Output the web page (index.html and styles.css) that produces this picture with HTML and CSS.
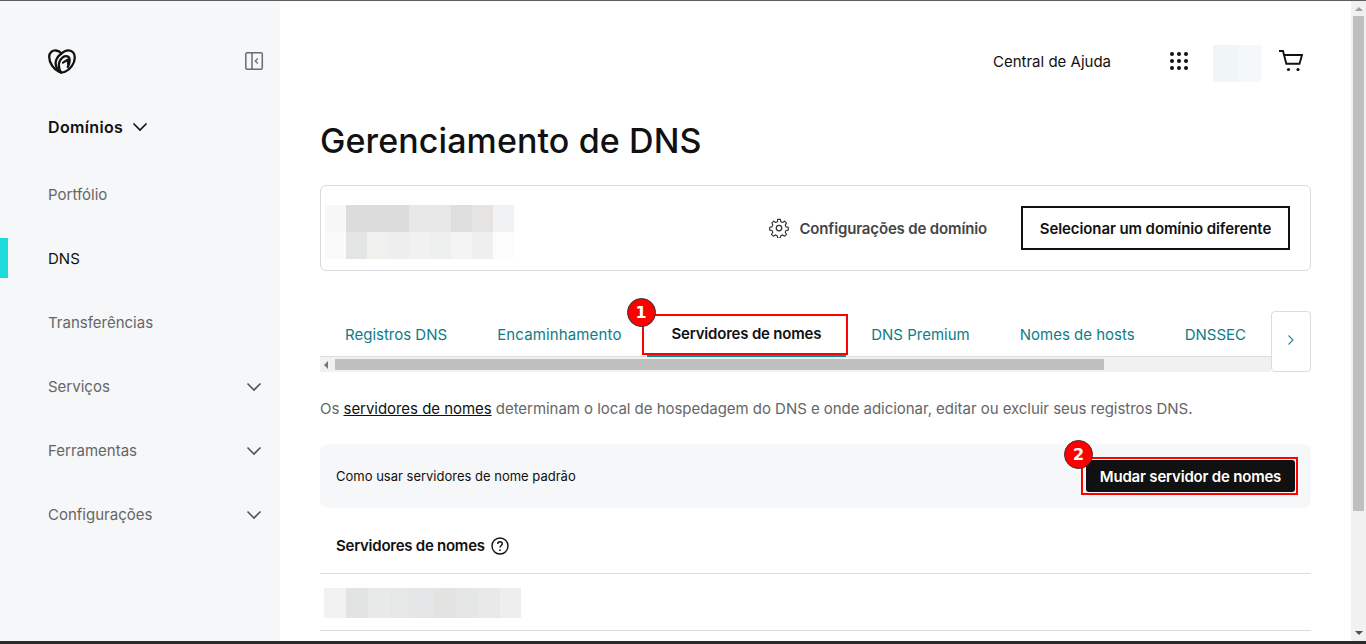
FILE: index.html
```html
<!DOCTYPE html>
<html lang="pt-BR">
<head>
<meta charset="utf-8">
<title>Gerenciamento de DNS</title>
<link rel="stylesheet" href="styles.css">
</head>
<body>
<div class="topline"></div>
<div class="app">
  <aside class="sidebar">
    <div class="brand">
      <svg class="logo" width="28" height="25" viewBox="0 0 28 25" fill="none" stroke="#111" stroke-width="2.300" stroke-linecap="round" stroke-linejoin="round"><path d="M11 22.800C6 20.800 1.200 14 1.200 8 1.200 3.500 4.500 1.200 8 1.500c2 .2 4 1.300 5.500 3 2-2 4.500-3.300 7-3.200 4 .2 6.300 3.200 6.300 7.200 0 6-4.800 12.300-9.800 14.300-2 .8-4 .8-6 0z"/><path d="M13.500 4.500C9.500 7.500 7.200 11 7.700 15.200c.4 3.400 2.300 6.800 5.300 8.300"/><path d="M13 23.500c-1.800-3-2.600-7-1.700-10.200C12.500 9 16.500 6.300 19.500 7.300c3 1 2.600 6.700.3 10.700"/><path d="M15 13.600l4.700-3 .5 4.600"/></svg>
      <svg class="collapse" width="20" height="20" viewBox="0 0 20 20" fill="none" stroke="#6b6b6b" stroke-width="1.500"><rect x="1.800" y="1.800" width="16.500" height="16.500" rx="1.500"/><path d="M8 2v16"/><path d="M13.800 7.500L11.300 10l2.500 2.500" stroke-width="1.300"/></svg>
    </div>
    <div class="domains"><span>Domínios</span>
      <svg width="16" height="10" viewBox="0 0 16 10" fill="none" stroke="#111" stroke-width="1.600"><path d="M1.500 1.500L8 8l6.500-6.500"/></svg>
    </div>
    <nav class="nav">
      <a class="nav-item">Portfólio</a>
      <a class="nav-item active">DNS</a>
      <a class="nav-item">Transferências</a>
      <a class="nav-item">Serviços<svg class="nav-chev" width="16" height="10" viewBox="0 0 16 10" fill="none" stroke="#555" stroke-width="1.600"><path d="M1.500 1.500L8 8l6.500-6.500"/></svg></a>
      <a class="nav-item">Ferramentas<svg class="nav-chev" width="16" height="10" viewBox="0 0 16 10" fill="none" stroke="#555" stroke-width="1.600"><path d="M1.500 1.500L8 8l6.500-6.500"/></svg></a>
      <a class="nav-item">Configurações<svg class="nav-chev" width="16" height="10" viewBox="0 0 16 10" fill="none" stroke="#555" stroke-width="1.600"><path d="M1.500 1.500L8 8l6.500-6.500"/></svg></a>
    </nav>
  </aside>

  <main class="content">
    <header class="topbar">
      <a class="help">Central de Ajuda</a>
      <svg class="apps" width="18" height="18" viewBox="0 0 18 18" fill="#111"><circle cx="2" cy="2" r="2"/><circle cx="9" cy="2" r="2"/><circle cx="16" cy="2" r="2"/><circle cx="2" cy="9" r="2"/><circle cx="9" cy="9" r="2"/><circle cx="16" cy="9" r="2"/><circle cx="2" cy="16" r="2"/><circle cx="9" cy="16" r="2"/><circle cx="16" cy="16" r="2"/></svg>
      <div class="avatar"></div>
      <svg class="cart" width="24" height="22" viewBox="0 0 24 22" fill="none" stroke="#111" stroke-width="1.900"><path d="M0 1h4l3.300 12.800h13.200L23 5H5"/><circle cx="9.500" cy="19.500" r="1.600" fill="#111" stroke="none"/><circle cx="19" cy="19.500" r="1.600" fill="#111" stroke="none"/></svg>
    </header>

    <h1 class="title">Gerenciamento de DNS</h1>

    <section class="domain-card">
      <div class="blur-domain"></div>
      <div class="domain-actions">
        <a class="settings">
          <svg width="20" height="20" viewBox="0 0 24 24" fill="none" stroke="#333" stroke-width="1.500" stroke-linejoin="round"><circle cx="12" cy="12" r="3.300"/><path d="M10.200 1.800h3.600l.6 3 2.300 1 2.600-1.700 2.500 2.500-1.700 2.600 1 2.300 3 .6v3.600l-3 .6-1 2.300 1.700 2.600-2.500 2.500-2.600-1.700-2.300 1-.6 3h-3.600l-.6-3-2.300-1-2.600 1.700-2.500-2.500 1.700-2.600-1-2.300-3-.6v-3.600l3-.6 1-2.300L2.700 6.600l2.500-2.500 2.600 1.700 2.300-1z" transform="translate(12 12) scale(.92) translate(-12 -13)"/></svg>
          <span>Configurações de domínio</span>
        </a>
        <button class="select-btn">Selecionar um domínio diferente</button>
      </div>
    </section>

    <section class="tabs-wrap">
      <div class="tabs-scroll">
        <div class="tabs">
          <a class="tab">Registros DNS</a>
          <a class="tab tab-wide">Encaminhamento</a>
          <a class="tab tab-active">Servidores de nomes<span class="mark mark-tab"></span><span class="badge badge-tab">1</span></a>
          <a class="tab">DNS Premium</a>
          <a class="tab">Nomes de hosts</a>
          <a class="tab">DNSSEC</a>
        </div>
        <div class="hscroll"><span class="harrow"></span><span class="hthumb"></span></div>
      </div>
      <button class="next-btn"><svg width="8" height="12" viewBox="0 0 8 12" fill="none" stroke="#2f8a96" stroke-width="1.200"><path d="M1.500 1.500L6 6l-4.500 4.500"/></svg></button>
    </section>

    <p class="intro">Os <a class="intro-link">servidores de nomes</a> determinam o local de hospedagem do DNS e onde adicionar, editar ou excluir seus registros DNS.</p>

    <section class="banner">
      <span class="banner-text">Como usar servidores de nome padrão</span>
      <div class="change-wrap">
        <button class="change-btn">Mudar servidor de nomes</button>
        <span class="mark mark-btn"></span>
        <span class="badge badge-btn">2</span>
      </div>
    </section>

    <h2 class="ns-title">Servidores de nomes
      <svg width="18" height="18" viewBox="0 0 18 18" fill="none" stroke="#111" stroke-width="1.400"><circle cx="9" cy="9" r="8"/><path d="M6.700 7c0-1.400 1-2.300 2.300-2.300s2.300.9 2.300 2.100c0 1.700-2.300 1.800-2.300 3.700"/><circle cx="9" cy="13.200" r=".9" fill="#111" stroke="none"/></svg>
    </h2>
    <div class="ns-row"><div class="blur-ns"></div></div>
  </main>

  <div class="vscroll">
    <span class="varrow-up"></span>
    <span class="vthumb"></span>
    <span class="varrow-down"></span>
  </div>
</div>
<div class="bottomline"></div>
</body>
</html>
```
FILE: styles.css
```css
* { box-sizing: border-box; }
html, body { margin: 0; height: 100%; overflow: hidden; }
body {
  display: flex;
  flex-direction: column;
  height: 644px;
  background: #fff;
  color: #111;
  font-family: "Inter", "Liberation Sans", sans-serif;
}
.topline { height: 1px; background: #5e5e5e; flex: none; }
.bottomline { height: 3px; background: #2a2a2a; flex: none; }
.app { flex: 1; display: flex; min-height: 0; }

/* Sidebar */
.sidebar { width: 280px; flex: none; background: #f5f7f8; padding-top: 47px; }
.brand { display: flex; justify-content: space-between; align-items: center; padding: 0 16px 0 48px; height: 26px; }
.domains { display: flex; align-items: center; gap: 9px; margin: 40px 0 0 48px; height: 26px; font-size: 16px; font-weight: 600; letter-spacing: .35px; }
.nav { display: flex; flex-direction: column; gap: 24px; margin-top: 34px; }
.nav-item { display: flex; align-items: center; justify-content: space-between; height: 40px; padding: 0 18px 0 48px; font-size: 15px; color: #666; }
.nav-chev { margin-top: 1px; }
.nav-item.active { color: #111; border-left: 8px solid #1bdbdb; padding-left: 40px; }

/* Main */
.content { flex: 1; min-width: 0; padding: 44px 40px 0; overflow: hidden; }
.topbar { display: flex; justify-content: flex-end; align-items: center; height: 37px; padding-right: 8px; }
.help { font-size: 15px; margin: 0 59px 4px 0; }
.apps { margin-bottom: 5px; }
.cart { margin-bottom: 5px; }
.avatar { width: 48px; height: 37px; margin: 0 18px 0 25px; background: linear-gradient(90deg, #f0f5f5 50%, #f5f8f8 50%); }
.title { margin: 37px 0 0; font-size: 34px; line-height: 44px; font-weight: 500; letter-spacing: .1px; }

.domain-card { display: flex; justify-content: space-between; align-items: center; height: 86px; margin-top: 22px; padding: 0 20px 0 4px; border: 1px solid #d6dbe0; border-radius: 6px; }
.blur-domain {
  width: 189px; height: 54px; margin-top: 8px;
  background:
    linear-gradient(90deg, #f7f7f7 21px, #dcdcdc 21px 84px, #e7e7e7 84px 126px, #dedede 126px 147px, #e5e4e2 147px 168px, #f1f2f4 168px) top / 100% 27px no-repeat,
    linear-gradient(90deg, #fafafa 21px, #e4e5e5 21px 42px, #f0f0ee 42px 63px, #eeeeee 63px 84px, #f1f1f1 84px 105px, #eef0ef 105px 126px, #f4f4f4 126px 147px, #efefef 147px 168px, #fbfcfb 168px) bottom / 100% 27px no-repeat;
}
.domain-actions { display: flex; align-items: center; gap: 34px; }
.settings { display: flex; align-items: center; gap: 10px; font-size: 15px; font-weight: 600; letter-spacing: -.15px; color: #444; }
.select-btn { width: 269px; height: 44px; background: #fff; border: 2px solid #111; font: 600 15px "Inter", "Liberation Sans", sans-serif; letter-spacing: -.1px; color: #111; padding: 0; }

/* Tabs */
.tabs-wrap { display: flex; margin-top: 40px; height: 61px; }
.tabs-scroll { flex: 1; min-width: 0; display: flex; flex-direction: column; }
.tabs { display: flex; height: 46px; padding-top: 1px; border-bottom: 1px solid #dcdcdc; }
.tab { position: relative; display: flex; align-items: center; padding: 0 25px; white-space: nowrap; font-size: 15px; color: #0e7c86; }
.tab-wide { letter-spacing: .14px; }
.tab-active { color: #111; font-weight: 600; letter-spacing: -.2px; border-bottom: 3px solid #0e8c96; margin-bottom: -1px; }
.hscroll { display: flex; align-items: center; flex: 1; background: #f1f1f1; padding-left: 4px; gap: 7px; }
.harrow { width: 0; height: 0; border: 4px solid transparent; border-right: 4px solid #777; border-left: 0; }
.hthumb { width: 769px; height: 11px; background: #bfbfbf; }
.next-btn { width: 40px; flex: none; background: #fff; border: 1px solid #dcdcdc; border-radius: 4px; padding: 0; }

.mark { position: absolute; border: 2px solid #f00; pointer-events: none; }
.mark-tab { left: -5px; right: -2px; top: 2px; bottom: -1px; }
.mark-btn { inset: -3px -3px -3px -5px; }
.badge { position: absolute; width: 29px; height: 29px; display: flex; align-items: center; justify-content: center; border-radius: 50%; background: #f00; border: 1px solid #333; color: #fff; font: 700 16px "DejaVu Sans", sans-serif; }
.badge-tab { left: -20px; top: -14px; }
.badge-btn { left: -22px; top: -20px; }

.intro { margin: 27px 0 0; font-size: 15px; line-height: 20px; letter-spacing: -.04px; color: #666; }
.intro-link { color: #111; text-decoration: underline; }

.banner { display: flex; justify-content: space-between; align-items: center; height: 64px; margin-top: 25px; padding: 0 16px; background: #f5f7f8; border-radius: 8px; }
.banner-text { font-size: 13px; }
.change-wrap { position: relative; display: flex; }
.change-btn { width: 209px; height: 32px; background: #111; color: #fff; border: 0; border-radius: 3px; font: 600 15px "Inter", "Liberation Sans", sans-serif; letter-spacing: -.2px; padding: 0; }

.ns-title { display: flex; align-items: center; gap: 6px; height: 66px; margin: 0; padding: 10px 0 0 16px; font-size: 15px; font-weight: 600; letter-spacing: -.25px; border-bottom: 1px solid #d6dbe0; }
.ns-row { height: 57px; padding: 14px 0 0 4px; border-bottom: 1px solid #d6dbe0; }
.blur-ns {
  width: 197px; height: 30px;
  background: linear-gradient(90deg, #f2f2f2 22px, #e2e4e4 22px 44px, #e8e9e9 44px 66px, #e6e7e7 66px 88px, #e4e6e8 88px 110px, #e3e3e2 110px 132px, #e5e6e6 132px 154px, #e9e9e9 154px 176px, #eeeeee 176px);
}

/* Vertical scrollbar */
.vscroll { width: 15px; flex: none; background: #f1f1f1; display: flex; flex-direction: column; align-items: center; }
.varrow-up { width: 0; height: 0; margin-top: 6px; border: 4px solid transparent; border-top: 0; border-bottom: 4px solid #a0a0a0; }
.vthumb { width: 11px; height: 495px; margin-top: 5px; background: #bfbfbf; }
.varrow-down { width: 0; height: 0; margin-top: auto; margin-bottom: 6px; border: 4px solid transparent; border-bottom: 0; border-top: 4px solid #505050; }
```
